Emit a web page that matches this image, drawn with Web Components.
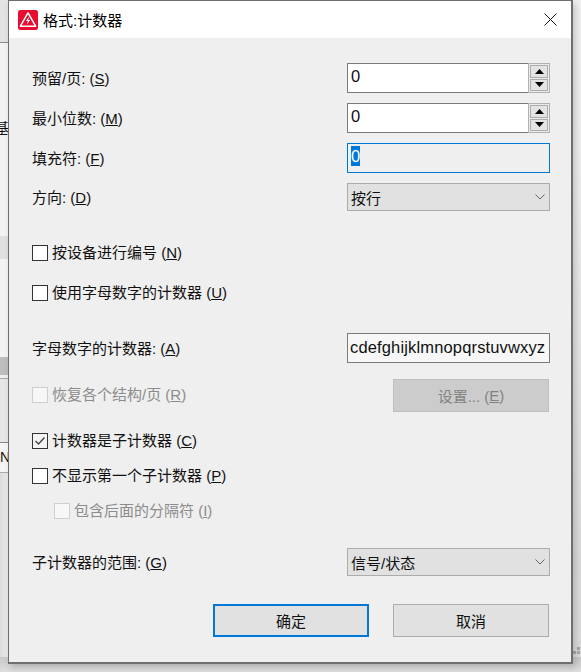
<!DOCTYPE html>
<html>
<head>
<meta charset="utf-8">
<style>
    html, body { margin: 0; height: 672px; overflow: hidden; }
    body {
        font: 15px "Liberation Sans", "Noto Sans CJK SC", sans-serif;
        color: #111;
    }
    [slot="actions"] { display: flex; gap: 24px; }
</style>
</head>
<body>
<desk-backdrop></desk-backdrop>
<format-dialog caption="格式:计数器">
    <form-row top="23">
        <span slot="label">预留/页: (<u>S</u>)</span>
        <spin-box value="0"></spin-box>
    </form-row>
    <form-row top="10">
        <span slot="label">最小位数: (<u>M</u>)</span>
        <spin-box value="0"></spin-box>
    </form-row>
    <form-row top="10">
        <span slot="label">填充符: (<u>F</u>)</span>
        <text-box value="0" focused></text-box>
    </form-row>
    <form-row top="10">
        <span slot="label">方向: (<u>D</u>)</span>
        <combo-box value="按行"></combo-box>
    </form-row>
    <check-row top="34">按设备进行编号 (<u>N</u>)</check-row>
    <check-row top="24">使用字母数字的计数器 (<u>U</u>)</check-row>
    <form-row top="32">
        <span slot="label">字母数字的计数器: (<u>A</u>)</span>
        <text-box value="cdefghijklmnopqrstuvwxyz" white></text-box>
    </form-row>
    <form-row top="16">
        <check-row slot="label" disabled>恢复各个结构/页 (<u>R</u>)</check-row>
        <push-button disabled>设置... (<u>E</u>)</push-button>
    </form-row>
    <check-row top="21" checked>计数器是子计数器 (<u>C</u>)</check-row>
    <check-row top="19">不显示第一个子计数器 (<u>P</u>)</check-row>
    <check-row top="19" indent disabled>包含后面的分隔符 (<u>I</u>)</check-row>
    <form-row top="29">
        <span slot="label">子计数器的范围: (<u>G</u>)</span>
        <combo-box value="信号/状态"></combo-box>
    </form-row>
    <div slot="actions">
        <push-button primary>确定</push-button>
        <push-button>取消</push-button>
    </div>
</format-dialog>

<script>
class DeskBackdrop extends HTMLElement {
    constructor() {
        super();
        this.attachShadow({ mode: 'open' });
        this.shadowRoot.innerHTML = `
            <style>
                :host {
                    display: grid;
                    grid-template-columns: 9px 1fr 9px;
                    grid-template-rows: 657px 15px;
                    width: 581px;
                    height: 672px;
                    overflow: hidden;
                    font-size: 14px;
                    background: #f1f1f1;
                }
                div { box-sizing: border-box; }
                .left { grid-column: 1; }
                .right {
                    grid-column: 3;
                    display: flex;
                    align-items: flex-end;
                    padding-bottom: 2px;
                    background: linear-gradient(180deg, #f2f2f2 0, #f0f0f0 150px, #dcdcdc 560px, #dedede 100%);
                }
                .right svg { display: block; }
                .bottom { grid-column: 1 / 4; background: linear-gradient(180deg, #c9c9c9, #dedede); }
                .a { height: 43px; background: #e3e3e3; border-bottom: 1px solid #8a8a8a; }
                .b { height: 193px; background: #f3f3f3; white-space: nowrap; padding-top: 75px; line-height: 20px; direction: rtl; }
                .c { height: 23px; background: #e0e0e0; }
                .d { height: 98px; background: #f3f3f3; }
                .e { height: 18px; background: #bdbdbd; }
                .f { height: 4px; background: #efefef; border-bottom: 1px solid #a8a8a8; }
                .g { height: 63px; background: #e6e6e6; }
                .h { height: 31px; background: #f5f5f5; border-top: 1px solid #888; border-bottom: 1px solid #aaa; line-height: 29px; }
                .i { height: 184px; background: linear-gradient(90deg, #dcdcdc, #ebebeb); }
            </style>
            <div class="left">
                <div class="a"></div>
                <div class="b">的基</div>
                <div class="c"></div>
                <div class="d"></div>
                <div class="e"></div>
                <div class="f"></div>
                <div class="g"></div>
                <div class="h">N</div>
                <div class="i"></div>
            </div>
            <div class="right">
                <svg width="9" height="8"><path d="M1 4h3v3H1zM5 0h3v3H5zM5 4h3v3H5z" fill="#a9a9a9"/></svg>
            </div>
            <div class="bottom"></div>
        `;
    }
}

class FormatDialog extends HTMLElement {
    constructor() {
        super();
        this.attachShadow({ mode: 'open' });
        this.shadowRoot.innerHTML = `
            <style>
                :host {
                    position: absolute;
                    left: 8px;
                    top: 0;
                    width: 565px;
                    height: 664px;
                    box-sizing: border-box;
                    display: flex;
                    flex-direction: column;
                    background: #efefef;
                    border: 1px solid #6f6f6f;
                    border-width: 1px 2px 2px 1px;
                    box-shadow: 3px 3px 7px rgba(0,0,0,.18);
                }
                header {
                    height: 37px;
                    flex: none;
                    display: flex;
                    align-items: center;
                    background: #fff;
                    padding-left: 9px;
                    gap: 5px;
                    color: #000;
                }
                header svg { flex: none; display: block; }
                .close { margin-left: auto; margin-right: 14px; }
                main { flex: 1; padding: 2px 21px 0 23px; }
                footer { display: flex; justify-content: flex-end; padding: 0 22px 25px 0; }
            </style>
            <header>
                <svg width="20" height="20" viewBox="0 0 20 20">
                    <rect width="20" height="20" rx="2.5" fill="#e60d2e"/>
                    <path d="M10 2.8 L17.6 16.2 H2.4 Z" fill="none" stroke="#fff" stroke-width="1.5" stroke-linejoin="round"/>
                    <path d="M11.2 6.6 L8 11 H9.9 L8.9 14.4 L12.2 10 H10.3 Z" fill="#fff"/>
                </svg>
                <span id="caption"></span>
                <svg class="close" width="13" height="13" viewBox="0 0 13 13">
                    <path d="M.5.5 12.5 12.5M12.5.5.5 12.5" stroke="#111" stroke-width="1" fill="none"/>
                </svg>
            </header>
            <main><slot></slot></main>
            <footer><slot name="actions"></slot></footer>
        `;
    }

    connectedCallback() {
        this.shadowRoot.querySelector('#caption').textContent = this.getAttribute('caption');
    }
}

class FormRow extends HTMLElement {
    constructor() {
        super();
        this.attachShadow({ mode: 'open' });
        this.shadowRoot.innerHTML = `
            <style>
                :host { display: flex; align-items: center; justify-content: space-between; }
                .label { padding-bottom: 1px; }
                .field { flex: none; width: 203px; display: flex; justify-content: flex-end; }
            </style>
            <div class="label"><slot name="label"></slot></div>
            <div class="field"><slot></slot></div>
        `;
    }

    connectedCallback() {
        this.style.marginTop = (this.getAttribute('top') || 0) + 'px';
    }
}

class SpinBox extends HTMLElement {
    constructor() {
        super();
        this.attachShadow({ mode: 'open' });
        this.shadowRoot.innerHTML = `
            <style>
                :host { display: flex; width: 203px; height: 30px; box-sizing: border-box; font-size: 16.5px; }
                .input {
                    flex: 1;
                    background: #fff;
                    border: 1px solid #7a7a7a;
                    border-right: 0;
                    padding-left: 3px;
                    line-height: 25px;
                }
                .arrows {
                    flex: none;
                    width: 22px;
                    box-sizing: border-box;
                    border: 1px solid #b0b0b0;
                    padding: 1px;
                    display: flex;
                    flex-direction: column;
                    gap: 1px;
                    background: #ececec;
                }
                .arrow {
                    flex: 1;
                    background: #e3e3e3;
                    border: 1px solid #acacac;
                    display: flex;
                    align-items: center;
                    justify-content: center;
                }
            </style>
            <div class="input" id="val"></div>
            <div class="arrows">
                <div class="arrow"><svg width="9" height="5"><path d="M4.5 0 9 5H0Z" fill="#000"/></svg></div>
                <div class="arrow"><svg width="9" height="5"><path d="M0 0H9L4.5 5Z" fill="#000"/></svg></div>
            </div>
        `;
    }

    connectedCallback() {
        this.shadowRoot.querySelector('#val').textContent = this.getAttribute('value');
    }
}

class TextBox extends HTMLElement {
    constructor() {
        super();
        this.attachShadow({ mode: 'open' });
        this.shadowRoot.innerHTML = `
            <style>
                :host {
                    display: block;
                    width: 203px;
                    height: 30px;
                    box-sizing: border-box;
                    border: 1px solid #7a7a7a;
                    padding-left: 3px;
                    font-size: 16.5px;
                    line-height: 26px;
                    white-space: nowrap;
                    overflow: hidden;
                    background: #f7f7f7;
                }
                :host([white]) { padding-left: 2px; letter-spacing: .15px; }
                :host([focused]) { border-color: #0078d7; background: #efefef; }
                :host([focused]) span {
                    display: block;
                    width: max-content;
                    margin-top: 2px;
                    height: 20px;
                    line-height: 20px;
                    background: #0078d7;
                    color: #fff;
                }
            </style>
            <span id="val"></span>
        `;
    }

    connectedCallback() {
        this.shadowRoot.querySelector('#val').textContent = this.getAttribute('value');
    }
}

class ComboBox extends HTMLElement {
    constructor() {
        super();
        this.attachShadow({ mode: 'open' });
        this.shadowRoot.innerHTML = `
            <style>
                :host {
                    display: flex;
                    align-items: center;
                    justify-content: space-between;
                    width: 203px;
                    height: 28px;
                    box-sizing: border-box;
                    border: 1px solid #acacac;
                    background: #e1e1e1;
                    padding: 0 4px 0 3px;
                }
                svg { display: block; }
            </style>
            <span id="val"></span>
            <svg width="10" height="6" viewBox="0 0 10 6"><path d="M.5.5 5 5 9.5.5" fill="none" stroke="#666" stroke-width="1"/></svg>
        `;
    }

    connectedCallback() {
        this.shadowRoot.querySelector('#val').textContent = this.getAttribute('value');
    }
}

class CheckRow extends HTMLElement {
    constructor() {
        super();
        this.attachShadow({ mode: 'open' });
        this.shadowRoot.innerHTML = `
            <style>
                :host { display: flex; align-items: center; gap: 4px; height: 16px; color: #111; }
                :host([indent]) { margin-left: 22px; }
                :host([disabled]) { color: #8c8c8c; }
                .box {
                    width: 16px;
                    height: 16px;
                    box-sizing: border-box;
                    flex: none;
                    background: #fff;
                    border: 1px solid #333;
                }
                .text { margin-bottom: 3px; }
                :host([disabled]) .box { border-color: #cfcfcf; background: #f7f7f7; }
                svg { display: none; }
                :host([checked]) svg { display: block; }
                :host([checked]) .box { background: #f4f4f4; }
            </style>
            <div class="box">
                <svg width="14" height="14" viewBox="0 0 14 14"><path d="M2.5 7 5.5 10 11.5 3.5" fill="none" stroke="#444" stroke-width="1.4"/></svg>
            </div>
            <span class="text"><slot></slot></span>
        `;
    }

    connectedCallback() {
        const top = this.getAttribute('top');
        if (top) this.style.marginTop = top + 'px';
    }
}

class PushButton extends HTMLElement {
    constructor() {
        super();
        this.attachShadow({ mode: 'open' });
        this.shadowRoot.innerHTML = `
            <style>
                :host {
                    display: flex;
                    align-items: center;
                    justify-content: center;
                    width: 156px;
                    height: 33px;
                    box-sizing: border-box;
                    border: 1px solid #acacac;
                    background: #e1e1e1;
                    color: #111;
                }
                :host([primary]) { border: 2px solid #0078d7; }
                :host([disabled]) { background: #ccc; border-color: #bfbfbf; color: #838383; margin-right: 1px; }
            </style>
            <slot></slot>
        `;
    }
}

customElements.define('desk-backdrop', DeskBackdrop);
customElements.define('format-dialog', FormatDialog);
customElements.define('form-row', FormRow);
customElements.define('spin-box', SpinBox);
customElements.define('text-box', TextBox);
customElements.define('combo-box', ComboBox);
customElements.define('check-row', CheckRow);
customElements.define('push-button', PushButton);
</script>
</body>
</html>
